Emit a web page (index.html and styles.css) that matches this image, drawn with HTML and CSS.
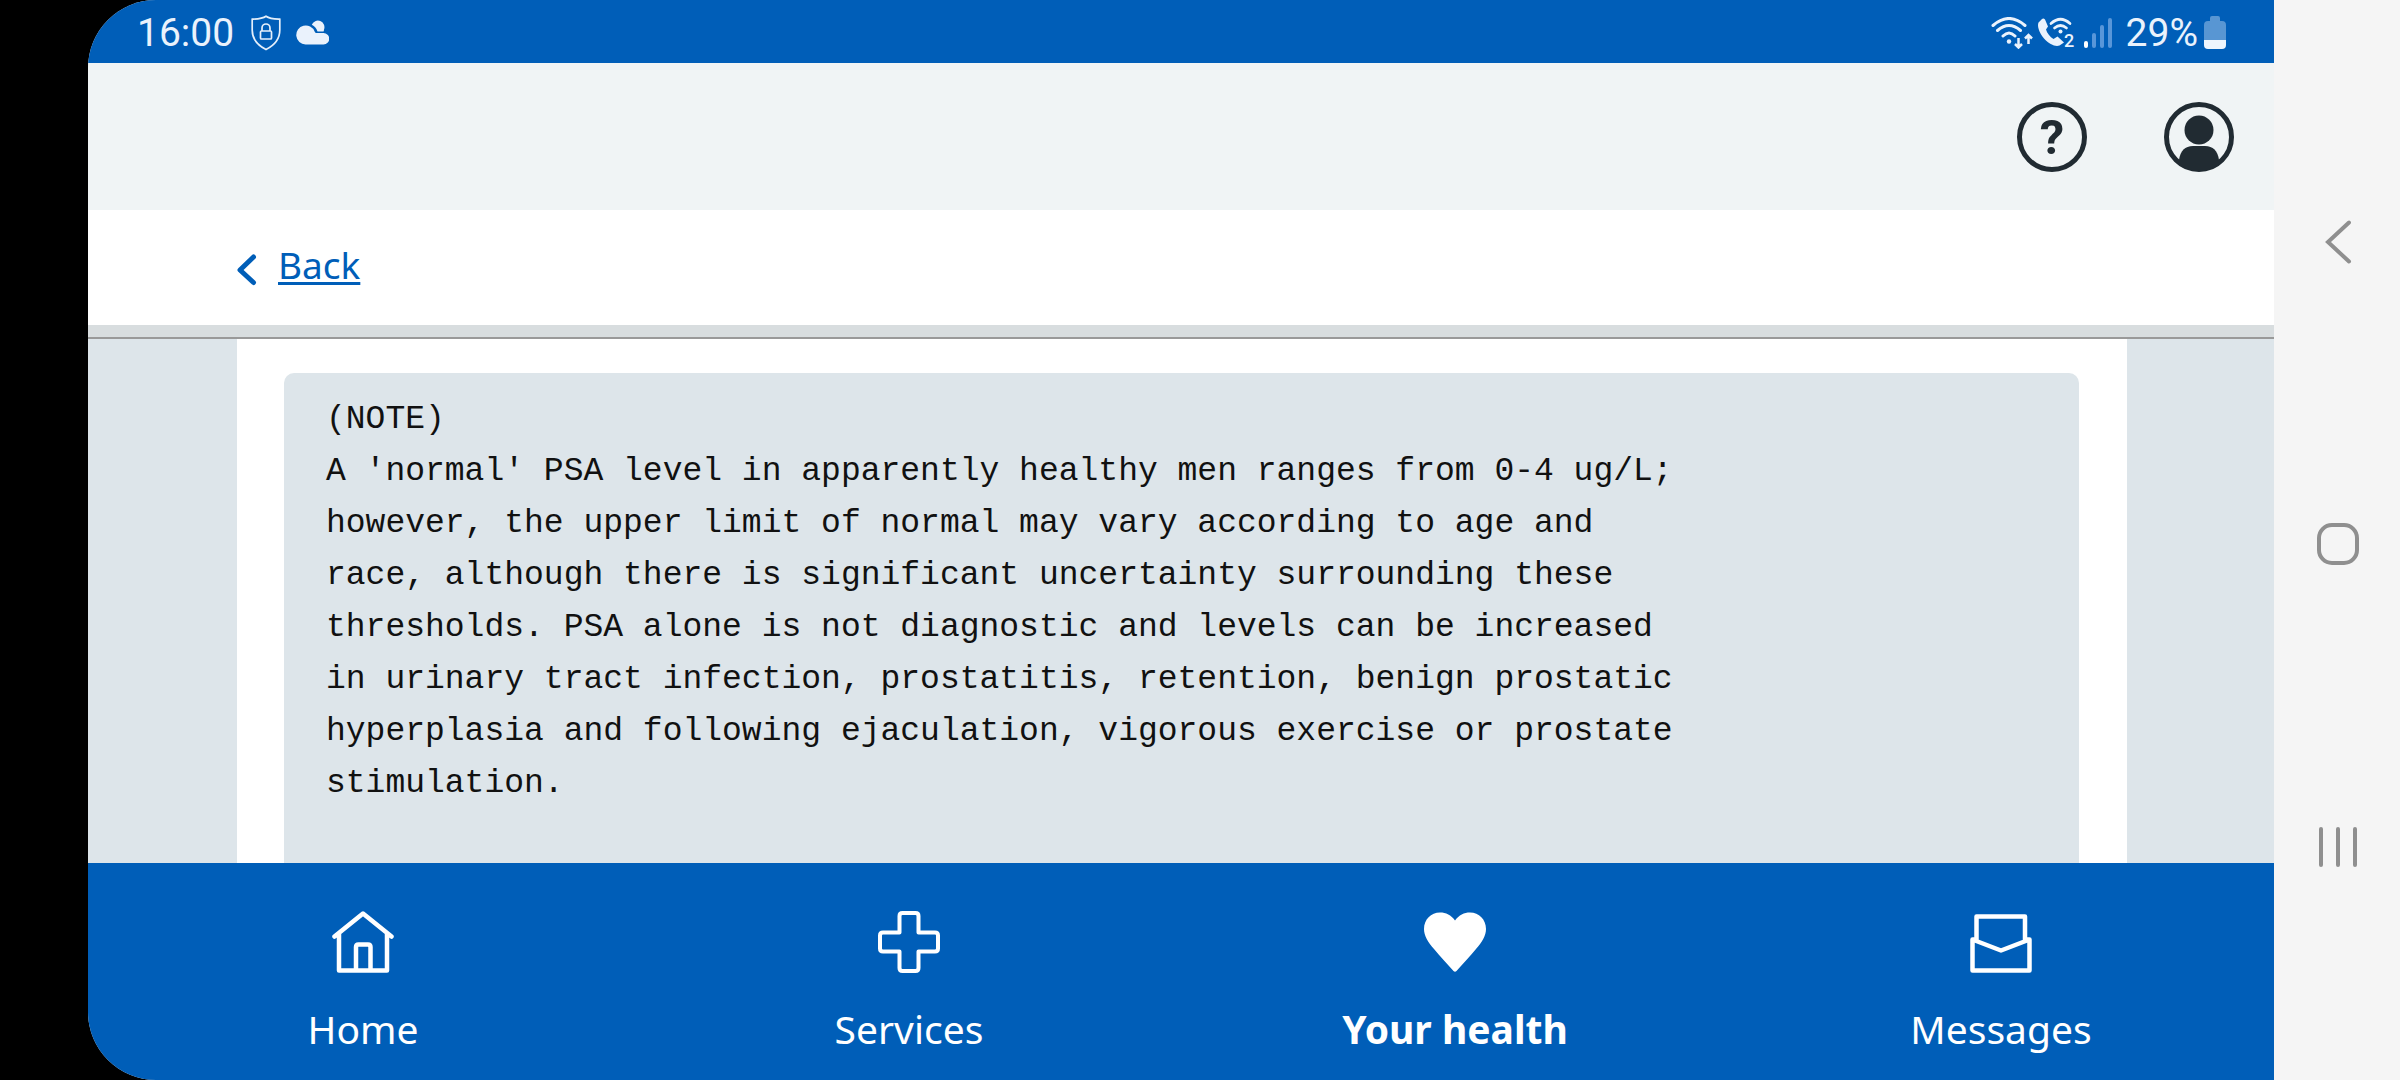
FILE: index.html
```html
<!doctype html>
<html lang="en">

<head>
	<meta charset="utf-8">
	<title>Test result</title>
	<link rel="stylesheet" href="styles.css">
</head>

<body>
	<div class="screen">
		<div class="status">
			<span class="clock">16:00</span>
			<svg class="shield" width="30" height="36" viewBox="0 0 30 36" fill="none" stroke="#e4effb" stroke-width="1.7">
				<path d="M15 1.2C11 4 6 4 1.2 4.2V15C1.2 24.500 7 30.500 15 34.500C23 30.500 28.800 24.500 28.800 15V4.200C24 4 19 4 15 1.200Z" />
				<rect x="9.500" y="16" width="11" height="8" rx="1" />
				<path d="M11 16V13a4 4 0 0 1 8 0v3" />
			</svg>
			<svg width="33" height="25" viewBox="0 0 33 25" fill="#eaf2fc">
				<path d="M9.500 24.500A9.500 9.500 0 1 1 18.600 11.500L19.700 13H27.500A5.700 5.700 0 0 1 27.500 24.500Z" />
				<path d="M15.800 4.800A6.500 6.500 0 0 1 28 9.500C28 10.500 27.800 11 27.500 11.500H21.500C20.500 8.500 18.700 6.200 15.800 4.800Z" />
			</svg>
			<div class="spacer"></div>
			<svg width="42" height="32" viewBox="0 0 42 32" fill="none" stroke="#eaf2fc" stroke-width="3" stroke-linecap="round">
				<path d="M2 8.500Q18 -5.500 34 8.500M6.500 13.500Q18 3.500 29.500 13.500M12 19Q18 13 24 19" />
				<circle cx="18" cy="24.500" r="2.200" fill="#eaf2fc" stroke="none" />
				<path d="M27.500 21v9M24 27l3.500 3.500L31 27M37.500 27v-8.500M34 21.500l3.500-3.500l3.500 3.500" stroke-width="2.500" stroke-linecap="butt" />
			</svg>
			<svg class="call" width="40" height="40" viewBox="0 -4 40 40" fill="#eaf2fc">
				<path d="M5 2L1.500 5.500C0 9 2 15.500 7 21.500C12.500 27.500 18.500 30 22.500 28.500L27 25.500L20.500 19.500L16.500 22C13 20 10 16 9 12.500L11 9.500L8 2.500Q6.500 1 5 2Z" />
				<path d="M14 6.500Q23.500 -2 33 6.500M17.500 11Q23.500 6 29.500 11" fill="none" stroke="#eaf2fc" stroke-width="2.700" stroke-linecap="round" />
				<circle cx="23.500" cy="14.500" r="2" />
				<text x="27" y="30" class="sim">2</text>
			</svg>
			<svg class="signal" width="28" height="30" viewBox="0 0 28 30" fill="#5896d9">
				<rect y="23" width="4" height="7" rx="2" fill="#fff" />
				<rect x="8" y="15" width="4" height="15" rx="2" />
				<rect x="16" y="7" width="4" height="23" rx="2" />
				<rect x="24" width="4" height="30" rx="2" />
			</svg>
			<span class="percent">29%</span>
			<svg width="22" height="33" viewBox="0 0 22 33">
				<path d="M6 5V2Q6 0 8 0h6q2 0 2 2v3h2q4 0 4 4v16H0V9Q0 5 4 5Z" fill="#5896d3" />
				<path d="M0 24h22v5q0 4-4 4H4q-4 0-4-4Z" fill="#eef5fd" />
			</svg>
		</div>

		<header class="header">
			<button class="help" aria-label="Help">?</button>
			<button class="account" aria-label="Account">
				<svg width="70" height="70" viewBox="0 0 70 70">
					<clipPath id="ring">
						<circle cx="35" cy="35" r="34" />
					</clipPath>
					<circle cx="35" cy="35" r="32.500" fill="none" stroke="#212b32" stroke-width="5" />
					<circle cx="35" cy="28" r="14.500" fill="#212b32" />
					<path d="M15 70V58Q17 44 29 44H41Q53 44 55 58V70Z" fill="#212b32" clip-path="url(#ring)" />
				</svg>
			</button>
		</header>

		<div class="backbar">
			<a class="back" href="#">
				<svg width="20" height="32" viewBox="0 0 20 32" fill="none" stroke="#005eb8" stroke-width="5" stroke-linecap="round" stroke-linejoin="round">
					<path d="M16.500 3L3 16L16.500 28.500" />
				</svg>
				<span>Back</span>
			</a>
		</div>

		<main class="content">
			<div class="card">
				<pre class="note">(NOTE)
A 'normal' PSA level in apparently healthy men ranges from 0-4 ug/L;
however, the upper limit of normal may vary according to age and
race, although there is significant uncertainty surrounding these
thresholds. PSA alone is not diagnostic and levels can be increased
in urinary tract infection, prostatitis, retention, benign prostatic
hyperplasia and following ejaculation, vigorous exercise or prostate
stimulation.</pre>
			</div>
		</main>

		<nav class="tabs">
			<a href="#">
				<svg width="62" height="62" viewBox="0 0 62 62" fill="none" stroke="#fff" stroke-width="4.500" stroke-linecap="round" stroke-linejoin="round">
					<path d="M2.500 25.500L31 2.500L59.500 25.500M7 23V59.500H55V23M24 59V36Q24 33.500 26.500 33.500H36Q38.500 33.500 38.500 36V59" />
				</svg>
				<span>Home</span>
			</a>
			<a href="#">
				<svg width="62" height="62" viewBox="0 0 62 62" fill="none" stroke="#fff" stroke-width="4" stroke-linejoin="round">
					<path d="M24.500 2H37.500Q40.500 2 40.500 5V21.500H57Q60 21.500 60 24.500V37.500Q60 40.500 57 40.500H40.500V57Q40.500 60 37.500 60H24.500Q21.500 60 21.500 57V40.500H5Q2 40.500 2 37.500V24.500Q2 21.500 5 21.500H21.500V5Q21.500 2 24.500 2Z" />
				</svg>
				<span>Services</span>
			</a>
			<a href="#" class="active" aria-current="page">
				<svg width="62" height="62" viewBox="0 0 62 62" fill="#fff">
					<path d="M31 9.500C27 4 22 1.500 16 1.500C7 1.500 0 8.500 0 18C0 25 4 31 10 38C16 45 23 53 29.500 60Q31 61.500 32.500 60C39 53 46 45 52 38C58 31 62 25 62 18C62 8.500 55 1.500 46 1.500C40 1.500 35 4 31 9.500Z" />
				</svg>
				<span>Your health</span>
			</a>
			<a href="#">
				<svg width="62" height="62" viewBox="0 0 62 62" fill="none" stroke="#fff" stroke-width="4.500" stroke-linejoin="round">
					<path d="M6.500 31V5.500H55V31M7 28.500H2.500V59.500H59.500V28.500H55M5 29.500L31 39.500L57 29.500" />
				</svg>
				<span>Messages</span>
			</a>
		</nav>
	</div>

	<div class="system">
		<button aria-label="Back">
			<svg width="40" height="44" viewBox="0 0 40 44">
				<path d="M31 2.500L10 22L31 41.500" />
			</svg>
		</button>
		<button aria-label="Home">
			<svg width="42" height="44" viewBox="0 0 42 44">
				<rect x="2" y="2" width="38" height="38" rx="13" />
			</svg>
		</button>
		<button aria-label="Recent apps">
			<svg width="40" height="44" viewBox="0 0 40 44">
				<path d="M3 4V40M20 4V40M37 4V40" />
			</svg>
		</button>
	</div>
</body>

</html>
```
FILE: styles.css
```css
* {
	box-sizing: border-box;
}

body {
	margin: 0;
	display: flex;
	height: 100vh;
	padding-left: 88px;
	background: #000;
	font-family: "Noto Sans", sans-serif;
	overflow: hidden;
}

svg {
	display: block;
	flex: none;
}

button {
	padding: 0;
	border: 0;
	background: none;
	cursor: pointer;
}

.screen {
	flex: 1;
	min-width: 0;
	display: flex;
	flex-direction: column;
	border-radius: 68px 0 0 68px;
	overflow: hidden;
	background: #dde5ea;
}

/* phone status bar */
.status {
	flex: none;
	height: 63px;
	display: flex;
	align-items: center;
	padding: 2px 48px 0 49px;
	background: #005eb8;
	color: #eaf2fc;
	font-family: Roboto, sans-serif;
	font-size: 39px;
	line-height: 46px;
}

.shield {
	margin: 0 15px 0 17px;
}

.spacer {
	flex: 1;
}

.call {
	margin: 0 7px 0 4px;
}

.sim {
	font-size: 18px;
	font-weight: 500;
}

.percent {
	margin: 0 6px 0 14px;
}

/* app header */
.header {
	flex: none;
	height: 147px;
	display: flex;
	align-items: center;
	justify-content: flex-end;
	gap: 77px;
	padding-right: 40px;
	background: #f0f4f5;
}

.help {
	width: 70px;
	height: 70px;
	padding-top: 2px;
	border: 5px solid #212b32;
	border-radius: 50%;
	color: #212b32;
	font-family: Roboto, sans-serif;
	font-size: 49px;
	font-weight: 700;
	line-height: 58px;
}

.backbar {
	flex: none;
	height: 129px;
	padding: 29px 149px 0;
	background: #fff;
	border-bottom: 2px solid #999;
	box-shadow: inset 0 -12px #d8dddf;
}

.back {
	display: inline-flex;
	align-items: center;
	gap: 21px;
	color: #005eb8;
	font-size: 37px;
	line-height: 52px;
	text-decoration-thickness: 3px;
	text-underline-offset: 3px;
}

.back svg {
	margin-top: 10px;
}

/* result */
.content {
	flex: 1;
	min-height: 0;
	padding: 0 147px 0 149px;
	overflow: hidden;
}

.card {
	height: 100%;
	padding: 34px 48px 0 47px;
	background: #fff;
}

.note {
	height: 100%;
	margin: 0;
	padding: 21px 42px;
	border-radius: 10px 10px 0 0;
	background: #dde5ea;
	color: #111;
	font-family: "Liberation Mono", monospace;
	font-size: 33px;
	line-height: 52px;
}

/* bottom navigation */
.tabs {
	flex: none;
	height: 217px;
	display: grid;
	grid-template-columns: repeat(4, 1fr);
	padding-left: 2px;
	background: #005eb8;
}

.tabs a {
	display: flex;
	flex-direction: column;
	align-items: center;
	gap: 28px;
	padding-top: 48px;
	color: #fff;
	font-size: 39px;
	line-height: 56px;
	text-decoration: none;
}

.tabs .active {
	font-weight: 700;
}

/* android buttons */
.system {
	flex: none;
	width: 126px;
	display: flex;
	flex-direction: column;
	align-items: center;
	justify-content: space-between;
	padding: 220px 0 211px 2px;
	background: #f5f5f5;
}

.system svg {
	fill: none;
	stroke: #8f8f8f;
	stroke-width: 4;
	stroke-linecap: round;
}
```
